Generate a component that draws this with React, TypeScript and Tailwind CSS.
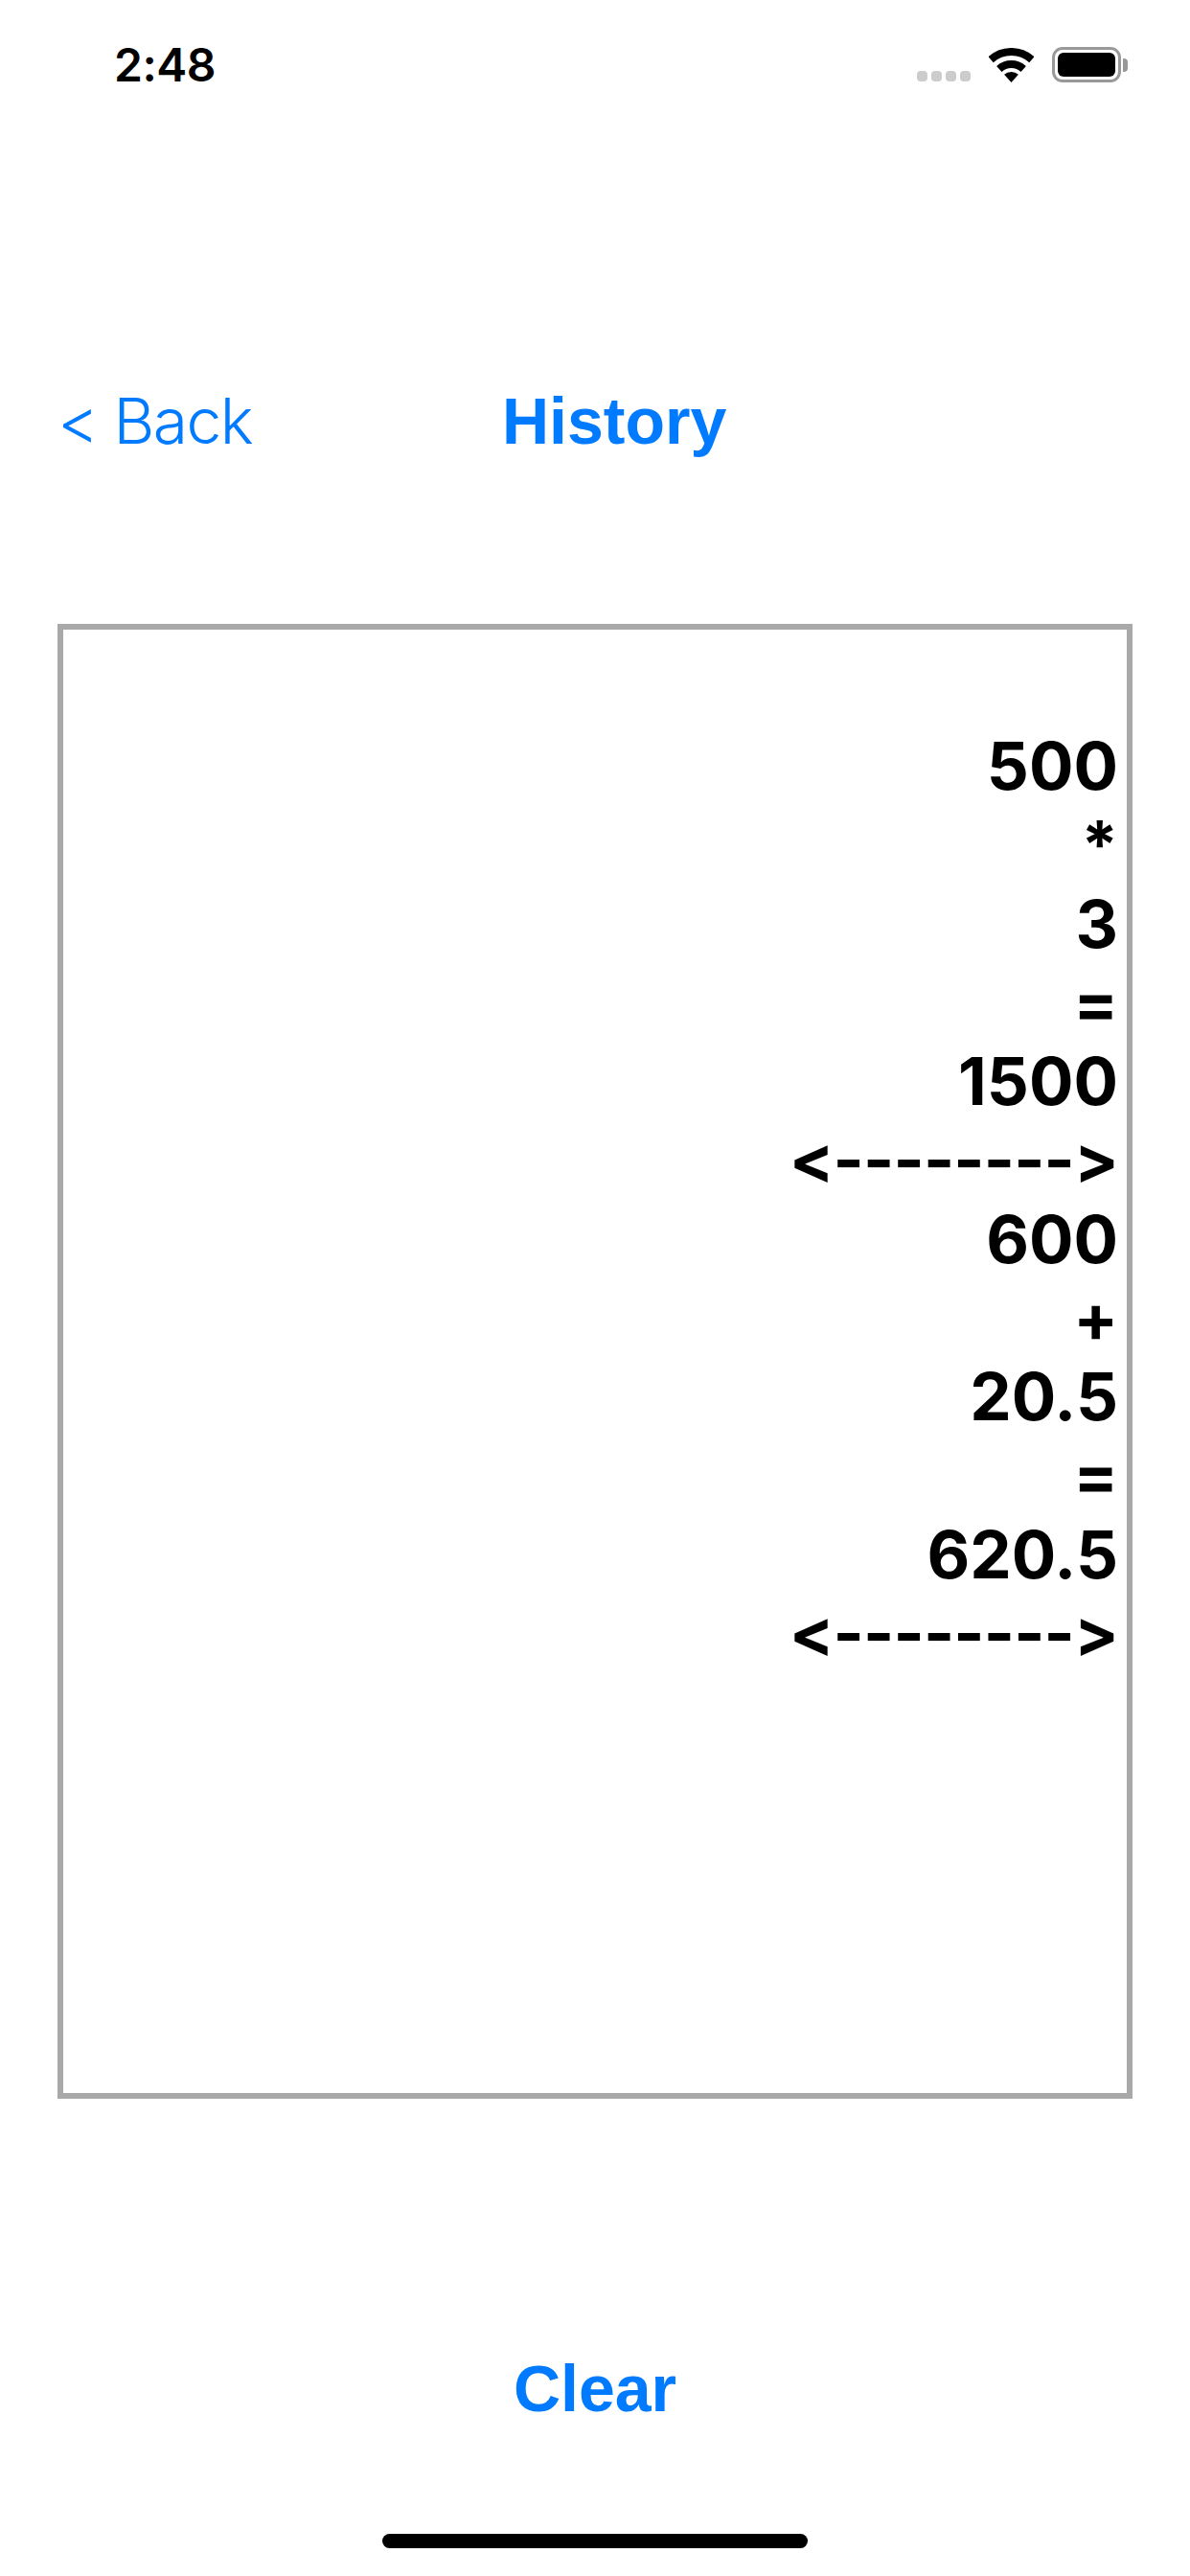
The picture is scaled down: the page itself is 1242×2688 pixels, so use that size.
const rows = ["500", "*", "3", "=", "1500", "<-------->", "600", "+", "20.5", "=", "620.5", "<-------->"];

function Wifi() {
  return (
    <svg width="47" height="36" viewBox="0 0 47 36" className="block">
      <path d="M2.1 12.2A32 32 0 0 1 44.9 12.2" fill="none" stroke="#000" strokeWidth="8" />
      <path d="M10.8 21.9A19 19 0 0 1 36.2 21.9" fill="none" stroke="#000" strokeWidth="8" />
      <path d="M23.5 36L16.1 27.8A11 11 0 0 1 30.9 27.8Z" fill="#000" />
    </svg>
  );
}

export default function App() {
  return (
    <div className="flex h-[2688px] w-[1242px] flex-col bg-white font-['Liberation_Sans',sans-serif] text-black">
      <div className="flex h-[136px] items-start justify-between pl-[119px] pr-[65px] pt-[39px]">
        <span className="font-['Inter',sans-serif] text-[48px] font-semibold leading-[58px] tracking-[-0.5px]">2:48</span>
        <div className="flex items-end pt-[10px]">
          <div className="mb-[1px] mr-[19px] flex gap-[4px]">
            <span className="h-[11px] w-[11px] rounded-[4px] bg-[#cccccc]" />
            <span className="h-[11px] w-[11px] rounded-[4px] bg-[#cccccc]" />
            <span className="h-[11px] w-[11px] rounded-[4px] bg-[#cccccc]" />
            <span className="h-[11px] w-[11px] rounded-[4px] bg-[#cccccc]" />
          </div>
          <Wifi />
          <div className="ml-[19px] flex items-center">
            <div className="h-[37px] w-[72px] rounded-[11px] border-[3px] border-[#999999] p-[3px]">
              <div className="h-full w-full rounded-[6px] bg-black" />
            </div>
            <div className="ml-[2px] h-[14px] w-[5px] rounded-r-[4px] bg-[#999999]" />
          </div>
        </div>
      </div>

      <div className="flex h-[515px] items-start pl-[60px] pt-[263px]">
        <span className="w-[464px] font-['Inter',sans-serif] text-[66px] font-[350] leading-[80px] tracking-[-1.6px] text-[#007aff]">&lt; Back</span>
        <span className="text-[68px] font-bold leading-[80px] text-[#007aff]">History</span>
      </div>

      <div className="mx-[60px] h-[1539px] border-[6px] border-[#a9a9a9] pr-[9px] pt-[101px] text-right font-['Inter',sans-serif] text-[69px] font-bold leading-[82.25px] [font-feature-settings:'calt'_0,'liga'_0]">
        {rows.map((r, i) => (
          <div key={i} className={r.length > 6 ? "tracking-[-0.85px]" : ""}>{r}</div>
        ))}
      </div>

      <div className="flex h-[498px] flex-col items-center">
        <span className="mt-[262px] text-[68px] font-bold leading-[80px] text-[#007aff]">Clear</span>
        <div className="mt-[112px] h-[15px] w-[444px] rounded-full bg-black" />
      </div>
    </div>
  );
}
